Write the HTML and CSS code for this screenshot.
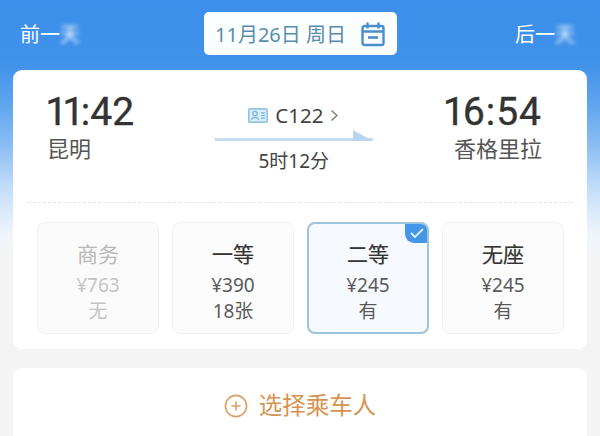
FILE: index.html
```html
<!DOCTYPE html>
<html lang="zh-CN">

<head>
	<meta charset="UTF-8">
	<meta name="viewport" content="width=device-width, initial-scale=1.0">
	<title>车次详情</title>
	<link rel="stylesheet" href="styles.css">
</head>

<body>
	<div class="page">
		<div class="date-bar">
			<span class="day-link">前一<span class="mosaic">天</span></span>
			<div class="date-pill">
				<span>11月26日 周日</span>
				<svg class="calendar" width="26" height="26" viewBox="0 0 26 26" fill="none" stroke="#4b8fca" stroke-width="2.4">
					<rect x="2.5" y="5" width="21" height="19" rx="2"></rect>
					<path d="M2.5 10.5h21M7.5 1.5v6M18.5 1.5v6"></path>
					<path d="M8 16.5h10" stroke-width="2.6"></path>
				</svg>
			</div>
			<span class="day-link">后一<span class="mosaic">天</span></span>
		</div>

		<div class="card">
			<div class="train-row">
				<div class="station">
					<div class="time">11:42</div>
					<div class="city">昆明</div>
				</div>
				<div class="train-info">
					<div class="train-no">
						<svg width="20" height="15" viewBox="0 0 20 15" fill="#d9eefa" stroke="#73b4da" stroke-width="1.2">
							<rect x="0.8" y="0.8" width="18.4" height="13.4" rx="1"></rect>
							<circle cx="7" cy="5.6" r="2.2" fill="none"></circle>
							<path d="M3.4 11.6c.5-2.6 6.7-2.6 7.2 0M13 4.8h4M13 7.5h4M13 10.2h4" fill="none"></path>
						</svg>
						<span>C122</span>
						<svg width="9" height="13" viewBox="0 0 9 13" fill="none" stroke="#777" stroke-width="1.3">
							<path d="M1.5 1.5l5.5 5-5.5 5"></path>
						</svg>
					</div>
					<div class="arrow"></div>
					<div class="duration">5时12分</div>
				</div>
				<div class="station station-end">
					<div class="time">16:54</div>
					<div class="city">香格里拉</div>
				</div>
			</div>

			<div class="seats">
				<div class="seat seat-off">
					<div class="seat-name">商务</div>
					<div class="seat-line">¥763</div>
					<div class="seat-line">无</div>
				</div>
				<div class="seat">
					<div class="seat-name">一等</div>
					<div class="seat-line">¥390</div>
					<div class="seat-line">18张</div>
				</div>
				<div class="seat seat-picked">
					<div class="seat-name">二等</div>
					<div class="seat-line">¥245</div>
					<div class="seat-line">有</div>
					<div class="check">
						<svg width="16" height="12" viewBox="0 0 16 12" fill="none" stroke="#dff0ff" stroke-width="1.8">
							<path d="M2 6l4 4 8-8"></path>
						</svg>
					</div>
				</div>
				<div class="seat">
					<div class="seat-name">无座</div>
					<div class="seat-line">¥245</div>
					<div class="seat-line">有</div>
				</div>
			</div>
		</div>

		<div class="card passenger">
			<svg width="24" height="24" viewBox="0 0 24 24" fill="none" stroke="#d9a066" stroke-width="1.6">
				<circle cx="12" cy="12" r="10.6"></circle>
				<path d="M12 7.5v9M7.5 12h9"></path>
			</svg>
			<span>选择乘车人</span>
		</div>
	</div>
</body>

</html>
```

FILE: styles.css
```css
* {
	box-sizing: border-box;
}

html,
body {
	margin: 0;
	height: 100%;
}

body {
	overflow: hidden;
	font-family: "Noto Sans", "Noto Sans CJK SC", sans-serif;
	color: #333;
}

.page {
	height: 436px;
	padding: 12px 13px 0;
	overflow: hidden;
	background: linear-gradient(to bottom, #3c8fea 0, #3f91ea 60px, #5ca2ee 100px, #8abdf3 145px, #c5dffa 190px, #f0f5fa 235px, #f4f4f5 260px);
}

.date-bar {
	height: 43px;
	display: flex;
	align-items: center;
	justify-content: space-between;
	padding: 0 8px 0 7px;
}

.day-link {
	width: 64px;
	font-size: 20px;
	color: #fff;
	white-space: nowrap;
}

.mosaic {
	filter: blur(2px);
}

.date-pill {
	width: 193px;
	height: 43px;
	margin-left: 2px;
	display: flex;
	align-items: center;
	justify-content: center;
	gap: 14px;
	background-color: #fbfeff;
	border-radius: 5px;
	font-size: 20px;
	color: #5a8cab;
	white-space: nowrap;
}

.card {
	background-color: #fff;
	border-radius: 9px;
}

.date-bar + .card {
	height: 279px;
	margin-top: 15px;
	padding: 0 15px;
}

.train-row {
	height: 133px;
	display: flex;
	justify-content: space-between;
	padding: 16px 30px 0 19px;
	border-bottom: 1px dashed #dfe3e6;
}

.time {
	font-family: Roboto, "Noto Sans", sans-serif;
	font-variant-numeric: proportional-nums;
	font-size: 39px;
	line-height: 52px;
	color: #333;
	-webkit-text-stroke: 0.4px #333;
}

.city {
	margin-top: -5px;
	font-size: 22px;
	line-height: 30px;
	color: #555;
}

.station-end {
	text-align: right;
}

.station-end .time {
	letter-spacing: 1px;
}

.train-info {
	width: 158px;
	margin-left: 9px;
	padding-top: 14px;
	display: flex;
	flex-direction: column;
	align-items: center;
}

.train-no {
	height: 30px;
	display: flex;
	align-items: center;
	gap: 7px;
	font-size: 20.5px;
	color: #444;
}

.arrow {
	width: 158px;
	height: 13px;
	background: linear-gradient(to bottom, transparent 8px, #c5dcf2 8px, #c5dcf2 11px, transparent 11px);
	position: relative;
}

.arrow::after {
	content: "";
	position: absolute;
	right: 0;
	top: 0;
	border-left: 20px solid #b9d5ef;
	border-top: 11px solid transparent;
}

.duration {
	margin-top: 5px;
	font-size: 19px;
	line-height: 26px;
	color: #444;
}

.seats {
	display: grid;
	grid-template-columns: repeat(4, 122px);
	gap: 13px;
	padding: 19px 9px 0;
}

.seat {
	position: relative;
	height: 112px;
	padding-top: 16px;
	text-align: center;
	background-color: #fcfcfc;
	border: 1px solid #f0f1f2;
	border-radius: 8px;
	overflow: hidden;
	color: #5a5a5a;
}

.seat-name {
	font-size: 21px;
	line-height: 30px;
	color: #333;
	-webkit-text-stroke: 0.2px #333;
}

.seat-line {
	font-size: 19px;
	line-height: 26px;
}

.seat-name + .seat-line {
	margin-top: 3px;
}

.seat-off {
	background-color: #fafafa;
	color: #c4c4c4;
}

.seat-off .seat-name {
	color: #b8b8b8;
	-webkit-text-stroke: 0;
}

.seat-picked {
	background-color: #f6fafe;
	border: 2px solid #9cc4dc;
	padding-top: 15px;
}

.check {
	position: absolute;
	top: -2px;
	right: -2px;
	width: 24px;
	height: 21px;
	display: flex;
	align-items: center;
	justify-content: center;
	background-color: #4595e8;
	border-bottom-left-radius: 9px;
}

.passenger {
	height: 80px;
	margin-top: 19px;
	display: flex;
	align-items: flex-start;
	justify-content: center;
	gap: 11px;
	padding-top: 21px;
	font-size: 23.5px;
	line-height: 32px;
	color: #d6934f;
}

.passenger svg {
	margin-top: 5px;
}
```
